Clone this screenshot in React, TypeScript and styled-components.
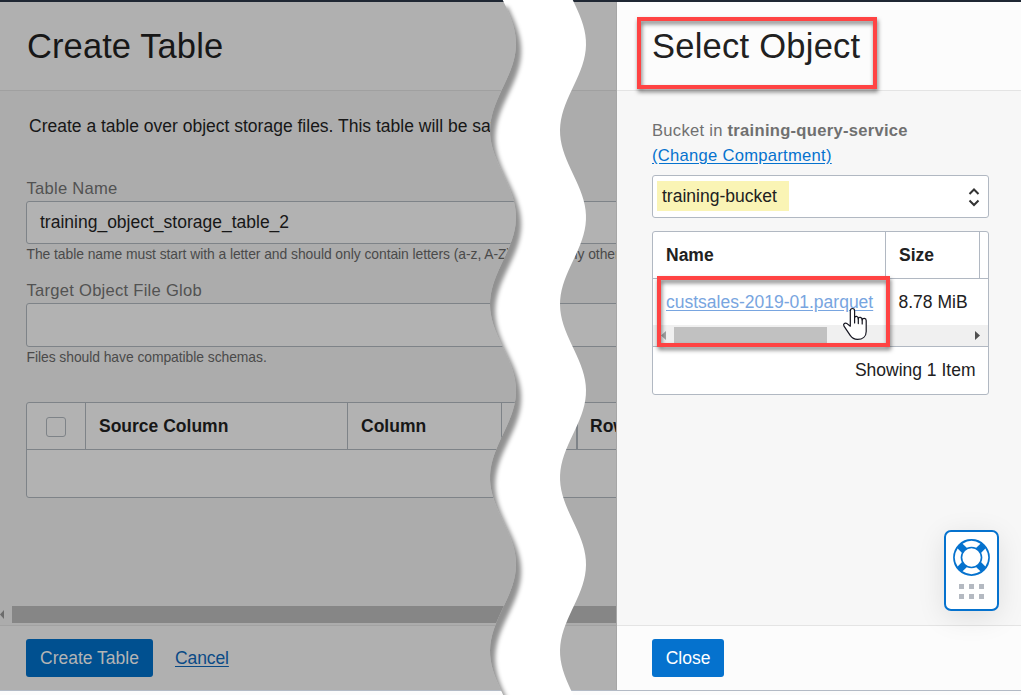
import React from "react";
import styled, { createGlobalStyle } from "styled-components";

const Global = createGlobalStyle`
  * { box-sizing: border-box; }
  body { margin: 0; background: #fcfcfc; overflow: hidden; }
  body, button { font-family: "Liberation Sans", Arial, sans-serif; }
`;

const Screen = styled.div`
  position: relative;
  width: 1021px;
  height: 695px;
  display: flex;
  flex-direction: column;
  overflow: hidden;
  background: #fcfcfc;
  font-size: 17.5px;
  color: #212121;
`;
const TopBar = styled.div`
  flex: none;
  height: 2px;
  background: #1f2733;
`;
const Panels = styled.div`
  flex: none;
  display: flex;
  height: 689px;
  border-bottom: 1px solid #b3bac5;
`;
const Panel = styled.section<{ $dim?: boolean }>`
  flex: none;
  width: ${(p) => (p.$dim ? 617 : 404)}px;
  display: flex;
  flex-direction: column;
  overflow: hidden;
  background: ${(p) => (p.$dim ? "#acacac" : "#f7f7f7")};
  color: ${(p) => (p.$dim ? "#171717" : "#212121")};
  border-right: ${(p) => (p.$dim ? "1px solid #a6a6a6" : "none")};
`;
const PanelHeader = styled.header<{ $dim?: boolean }>`
  flex: none;
  height: 89px;
  padding: 23px 0 0 ${(p) => (p.$dim ? 27 : 35)}px;
  background: ${(p) => (p.$dim ? "#b0b0b0" : "#fcfcfc")};
  border-bottom: 1px solid ${(p) => (p.$dim ? "#a0a0a0" : "#e4e4e4")};
`;
const Title = styled.h1<{ $spacing: number }>`
  margin: 0;
  font-size: 34.5px;
  line-height: 42px;
  font-weight: 400;
  letter-spacing: ${(p) => p.$spacing}px;
  white-space: nowrap;
`;
const PanelBody = styled.div<{ $dim?: boolean }>`
  flex: 1;
  min-height: 0;
  padding: ${(p) => (p.$dim ? "0 0 0 26px" : "0 32px 0 35px")};
`;
const PanelFooter = styled.footer<{ $dim?: boolean }>`
  flex: none;
  display: flex;
  align-items: flex-start;
  gap: 22px;
  height: 65px;
  padding: 13px 0 0 ${(p) => (p.$dim ? 26 : 35)}px;
  background: ${(p) => (p.$dim ? "#b0b0b0" : "#fcfcfc")};
  border-top: 1px solid ${(p) => (p.$dim ? "#a2a2a2" : "#e4e4e4")};
`;
const Button = styled.button<{ $dim?: boolean; $width: number }>`
  width: ${(p) => p.$width}px;
  height: 38px;
  padding: 0;
  border: 0;
  border-radius: 3px;
  background: ${(p) => (p.$dim ? "#005090" : "#0572ce")};
  color: ${(p) => (p.$dim ? "#b4b4b4" : "#fff")};
  font-size: 17.5px;
`;
const CancelLink = styled.a`
  line-height: 38px;
  color: #0a4a86;
  text-decoration: underline;
  text-underline-offset: 2px;
  letter-spacing: -0.1px;
`;
const Intro = styled.p`
  margin: 0;
  padding: 24px 0 0 3px;
  line-height: 22px;
  white-space: nowrap;
`;
const Field = styled.div<{ $top: number }>`
  padding-top: ${(p) => p.$top}px;
  width: 700px;
`;
const Label = styled.label`
  display: block;
  padding-left: 0.5px;
  line-height: 24px;
  font-size: 16.6px;
  letter-spacing: 0.25px;
  color: #525252;
`;
const Input = styled.div<{ $height: number }>`
  height: ${(p) => p.$height}px;
  padding-left: 13px;
  border: 1px solid #7e8388;
  border-radius: 3px;
  background: #b2b2b2;
  line-height: 40px;
`;
const Helper = styled.div`
  padding-left: 0.5px;
  line-height: 20px;
  font-size: 13.9px;
  color: #4a4a4a;
  white-space: nowrap;
  letter-spacing: -0.06px;
`;
const ColumnTable = styled.div`
  margin-top: 35px;
  width: 700px;
  height: 96px;
  border: 1px solid #7e8388;
  border-radius: 3px;
  background: #b2b2b2;
`;
const ColumnHead = styled.div`
  display: flex;
  height: 47px;
  border-bottom: 1px solid #7e8388;
  font-weight: 700;
  line-height: 46px;
`;
const ColumnCell = styled.div<{ $width: number; $thick?: boolean }>`
  flex: none;
  width: ${(p) => p.$width}px;
  padding-left: 13px;
  border-right: ${(p) => (p.$thick ? 2 : 1)}px solid #7e8388;
`;
const LastColumnCell = styled(ColumnCell)`
  padding-left: 12px;
`;
const CheckCell = styled(ColumnCell)`
  display: flex;
  align-items: center;
  justify-content: center;
  padding: 2px 0 0;
`;
const Checkbox = styled.span`
  width: 20px;
  height: 20px;
  border: 1px solid #7e8388;
  border-radius: 3px;
`;
const DimScroll = styled.div`
  flex: none;
  display: flex;
  align-items: center;
  height: 19px;
  padding-bottom: 2px;
  gap: 8px;
`;
const DimThumb = styled.div`
  flex: 1;
  height: 17px;
  background: #868686;
`;
const BucketLabel = styled.div`
  padding-top: 27px;
  font-size: 16.6px;
  line-height: 25px;
  letter-spacing: 0.27px;
  color: #707070;
  white-space: nowrap;
`;
const ChangeLink = styled.a`
  color: #0572ce;
  text-decoration: underline;
  text-underline-offset: 2px;
`;
const Select = styled.div`
  display: flex;
  align-items: center;
  justify-content: space-between;
  margin-top: 7px;
  height: 43px;
  padding: 0 8px 0 4px;
  border: 1px solid #b1b8c2;
  border-radius: 3px;
  background: #fff;
`;
const SelectedValue = styled.span`
  width: 132px;
  height: 30px;
  margin-bottom: 1px;
  padding-left: 5px;
  background: #faf4b5;
  line-height: 30px;
`;
const ObjectTable = styled.div`
  margin-top: 13px;
  height: 164px;
  border: 1px solid #b1b8c2;
  border-radius: 3px;
  background: #fff;
`;
const ObjectRow = styled.div<{ $head?: boolean }>`
  display: flex;
  height: ${(p) => (p.$head ? 47 : 46)}px;
  border-bottom: ${(p) => (p.$head ? "1px solid #b1b8c2" : "none")};
  font-weight: ${(p) => (p.$head ? 700 : 400)};
  line-height: 46px;
`;
const ObjectCell = styled.div<{ $width: number; $line?: boolean }>`
  flex: none;
  width: ${(p) => p.$width}px;
  padding-left: ${(p) => (p.$line || p.$width > 200 ? 13 : 12.5)}px;
  border-right: ${(p) => (p.$line ? "1px solid #b1b8c2" : "none")};
  white-space: nowrap;
`;
const FileLink = styled.a`
  color: #78a5e0;
  text-decoration: underline;
  text-underline-offset: 2px;
`;
const ObjectScroll = styled.div`
  display: flex;
  align-items: center;
  height: 21px;
  padding: 0 8px;
  background: #f0f0f0;
`;
const ObjectThumb = styled.div`
  width: 153px;
  height: 17px;
  margin: 0 auto 0 8px;
  background: #c1c1c1;
`;
const ObjectSummary = styled.div`
  height: 48px;
  padding-right: 12.5px;
  border-top: 1px solid #b1b8c2;
  line-height: 46px;
  text-align: right;
`;
const Callout = styled.div<{ $x: number; $y: number; $w: number; $h: number }>`
  position: absolute;
  left: ${(p) => p.$x}px;
  top: ${(p) => p.$y}px;
  width: ${(p) => p.$w}px;
  height: ${(p) => p.$h}px;
  border: 4px solid #ff4343;
  filter: drop-shadow(1px 3px 2px rgba(0, 0, 0, 0.5));
`;
const TearLayer = styled.svg`
  position: absolute;
  left: 0;
  top: 0;
`;
const Pointer = styled.svg`
  position: absolute;
  left: 840px;
  top: 307px;
`;
const HelpWidget = styled.div`
  position: absolute;
  left: 944px;
  top: 530px;
  width: 55px;
  height: 81px;
  display: flex;
  flex-direction: column;
  align-items: center;
  padding-top: 7px;
  border: 2px solid #0572ce;
  border-radius: 7px;
  background: #fff;
  box-shadow: 0 6px 28px rgba(0, 0, 0, 0.1);
`;
const DragDots = styled.div`
  display: grid;
  grid-template-columns: repeat(3, 5px);
  gap: 5px;
  margin-top: 8px;
`;
const Dot = styled.i`
  height: 5px;
  background: #b4b9c1;
`;

const PERIOD = 173.5;
const edge = (center: number) =>
  Array.from({ length: 140 }, (_, i) => {
    const y = i * 5;
    const x = center + 13 * Math.sin((2 * Math.PI * (y - 0.5)) / PERIOD);
    return `${x.toFixed(2)} ${y}`;
  });
const leftEdge = edge(503);
const rightEdge = edge(573);
const ribbon = `M${leftEdge.join("L")}L${rightEdge.slice().reverse().join("L")}Z`;
const leftSheet = `M440 0L${leftEdge.join("L")}L440 695Z`;

const Tear = () => (
  <TearLayer width="1021" height="695">
    <defs>
      <clipPath id="ribbon">
        <path d={ribbon} />
      </clipPath>
      <filter id="soft" x="-20%" y="-5%" width="150%" height="110%">
        <feGaussianBlur stdDeviation="2.2" />
      </filter>
    </defs>
    <path d={ribbon} fill="#fff" />
    <g clipPath="url(#ribbon)">
      <path d={leftSheet} transform="translate(5.2 7)" fill="#000" fillOpacity="0.43" filter="url(#soft)" />
    </g>
  </TearLayer>
);

const Arrow = ({ dir, color, w = 5, h = 9 }: { dir: "left" | "right"; color: string; w?: number; h?: number }) => (
  <svg width={w} height={h} viewBox="0 0 5 9" preserveAspectRatio="none">
    <path d={dir === "left" ? "M5 0V9L0 4.5Z" : "M0 0V9L5 4.5Z"} fill={color} />
  </svg>
);

const Lifebuoy = () => (
  <svg width="37" height="37" viewBox="-18.5 -18.5 37 37" fill="none">
    <circle r="13.8" stroke="#0572ce" strokeWidth="9.2" />
    {[0, 90, 180, 270].map((a) => (
      <path key={a} transform={`rotate(${a})`} d="M-8.94 -13.87A16.5 16.5 0 0 1 8.94 -13.87L4.75 -9.7A10.8 10.8 0 0 0 -4.75 -9.7Z" fill="#fff" />
    ))}
  </svg>
);

export default function App() {
  return (
    <Screen>
      <Global />
      <TopBar />
      <Panels>
        <Panel $dim>
          <PanelHeader $dim>
            <Title $spacing={0.1}>Create Table</Title>
          </PanelHeader>
          <PanelBody $dim>
            <Intro>Create a table over object storage files. This table will be saved</Intro>
            <Field $top={40}>
              <Label>Table Name</Label>
              <Input $height={43}>training_object_storage_table_2</Input>
              <Helper>The table name must start with a letter and should only contain letters (a-z, A-Z), 0-9, or any other</Helper>
            </Field>
            <Field $top={15}>
              <Label>Target Object File Glob</Label>
              <Input $height={44} />
              <Helper>Files should have compatible schemas.</Helper>
            </Field>
            <ColumnTable>
              <ColumnHead>
                <CheckCell $width={59}>
                  <Checkbox />
                </CheckCell>
                <ColumnCell $width={262}>Source Column</ColumnCell>
                <ColumnCell $width={154}>Column</ColumnCell>
                <ColumnCell $width={76} $thick />
                <LastColumnCell $width={120}>Row</LastColumnCell>
              </ColumnHead>
            </ColumnTable>
          </PanelBody>
          <DimScroll>
            <Arrow dir="left" color="#6c6c6c" w={4} />
            <DimThumb />
          </DimScroll>
          <PanelFooter $dim>
            <Button $dim $width={127}>Create Table</Button>
            <CancelLink>Cancel</CancelLink>
          </PanelFooter>
        </Panel>
        <Panel>
          <PanelHeader>
            <Title $spacing={0.25}>Select Object</Title>
          </PanelHeader>
          <PanelBody>
            <BucketLabel>
              Bucket in <b>training-query-service</b>
              <br />
              <ChangeLink>(Change Compartment)</ChangeLink>
            </BucketLabel>
            <Select>
              <SelectedValue>training-bucket</SelectedValue>
              <svg width="12" height="20" viewBox="0 0 12 20" fill="none" stroke="#333" strokeWidth="2">
                <path d="M1.5 7L6 2.5L10.5 7M1.5 13.5L6 18L10.5 13.5" />
              </svg>
            </Select>
            <ObjectTable>
              <ObjectRow $head>
                <ObjectCell $width={233} $line>Name</ObjectCell>
                <ObjectCell $width={94} $line>Size</ObjectCell>
              </ObjectRow>
              <ObjectRow>
                <ObjectCell $width={233}>
                  <FileLink>custsales-2019-01.parquet</FileLink>
                </ObjectCell>
                <ObjectCell $width={94}>8.78 MiB</ObjectCell>
              </ObjectRow>
              <ObjectScroll>
                <Arrow dir="left" color="#a3a3a3" />
                <ObjectThumb />
                <Arrow dir="right" color="#505050" />
              </ObjectScroll>
              <ObjectSummary>Showing 1 Item</ObjectSummary>
            </ObjectTable>
          </PanelBody>
          <PanelFooter>
            <Button $width={72}>Close</Button>
          </PanelFooter>
        </Panel>
      </Panels>
      <Tear />
      <Callout $x={637} $y={17} $w={240} $h={72} />
      <Callout $x={657} $y={276} $w={233} $h={71} />
      <Pointer width="29" height="34" viewBox="0 0 29 34">
        <path
          d="M12.5 1.5C11 1.5 10.3 2.6 10.3 4V19.2L7 16.6C5 15.2 2.8 17 4 19.2L10.2 28.4C12 31 13.8 32.4 17.4 32.4C22.6 32.4 26.2 29.4 26.2 24.4V13.4C26.2 10.8 22.6 10.6 22.2 13C22.2 9.8 18.7 9.4 18.3 11.9C18.2 8.8 15 8.8 14.6 10.6V4C14.6 2.6 14 1.5 12.5 1.5Z"
          fill="#fff"
          stroke="#14141f"
          strokeWidth="1.2"
          strokeLinejoin="round"
        />
        <path d="M14.6 10V16M18.3 11.5V16.6M22.2 12.6V17" stroke="#14141f" strokeWidth="1.2" strokeLinecap="round" />
      </Pointer>
      <HelpWidget>
        <Lifebuoy />
        <DragDots>
          {[0, 1, 2, 3, 4, 5].map((d) => (
            <Dot key={d} />
          ))}
        </DragDots>
      </HelpWidget>
    </Screen>
  );
}
